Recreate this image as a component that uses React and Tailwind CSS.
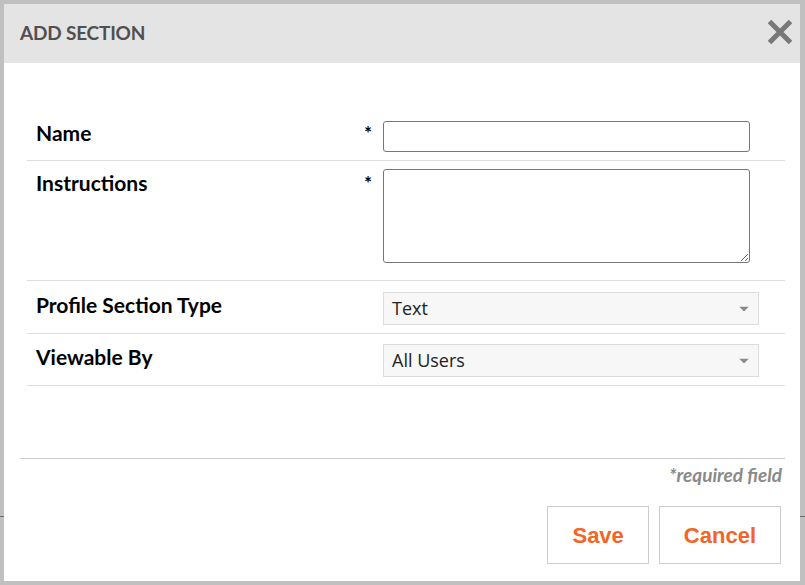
import React from 'react';

const lato = { fontFamily: 'Lato, "Noto Sans", sans-serif' };

const Caret = () => (
  <svg width="10" height="5" viewBox="0 0 10 5" className="absolute right-[9px] top-1/2 -translate-y-1/2">
    <path d="M0 0 L10 0 L5 5 Z" fill="#8a8a8a" />
  </svg>
);

const Select = ({ value }) => (
  <div className="relative w-[376px] h-[33px] bg-[#f7f7f7] border border-[#dcdcdc] flex items-center pl-[8px] text-[18px] text-[#222] font-['Open_Sans',sans-serif]">
    {value}
    <Caret />
  </div>
);

const Row = ({ label, required, className, labelClass = '', children }) => (
  <div className={`flex border-b border-[#dedede] ${className}`}>
    <div className={`w-[337px] shrink-0 pl-[9px] text-[21px] leading-[24px] font-bold text-black ${labelClass}`} style={lato}>
      {label}
    </div>
    <div className={`w-[19px] shrink-0 text-[19px] leading-[24px] font-bold text-black ${labelClass}`} style={lato}>
      {required ? '*' : ''}
    </div>
    {children}
  </div>
);

export default function App() {
  return (
    <div className="relative w-[805px] h-[585px] bg-[#c0c0c0] pt-[4px] pl-[4px] pr-[5px] pb-[4px]">
      {/* page rule showing under the overlay */}
      <div className="absolute left-0 right-0 top-[516px] h-px bg-[#6a6a6a]" />

      <div className="relative h-full bg-white flex flex-col">
        <div className="h-[59px] bg-[#e4e4e4] flex items-center justify-between pl-[16px] pr-[7px]">
          <h2 className="text-[19px] font-bold text-[#505050] tracking-[-0.2px]" style={lato}>
            ADD SECTION
          </h2>
          <svg width="26" height="26" viewBox="0 0 26 26" className="mt-[-3px]">
            <path d="M2.5 2.5 L23.5 23.5 M23.5 2.5 L2.5 23.5" stroke="#787878" strokeWidth="5" />
          </svg>
        </div>

        <div className="ml-[23px] mr-[15px] mt-[48px]">
          <Row label="Name" required className="pt-[10px] pb-[8px]">
            <input className="w-[367px] h-[31px] border border-[#767676] rounded-[3px] outline-none" />
          </Row>
          <Row label="Instructions" required className="pt-[8px] pb-[17px]" labelClass="mt-[2px]">
            <textarea className="w-[367px] h-[94px] border border-[#767676] rounded-[3px] outline-none block" />
          </Row>
          <Row label="Profile Section Type" className="pt-[11px] pb-[8px]" labelClass="mt-[1px]">
            <Select value="Text" />
          </Row>
          <Row label="Viewable By" className="pt-[10px] pb-[8px]" labelClass="mt-[1px]">
            <Select value="All Users" />
          </Row>
        </div>

        <div className="mt-[72px] ml-[16px] mr-[15px] border-t border-[#cccccc] flex flex-col items-end">
          <p className="mt-[4px] mr-[3px] text-[19px] leading-[24px] font-bold italic text-[#8a8a8a]" style={lato}>
            *required field
          </p>
          <div className="mt-[19px] mr-[4px] flex gap-[10px]">
            <button className="h-[58px] px-[24px] border border-[#cccccc] bg-white text-[22px] font-bold text-[#f26526] font-['Liberation_Sans',Arial,sans-serif]">
              Save
            </button>
            <button className="h-[58px] px-[24px] border border-[#cccccc] bg-white text-[22px] font-bold text-[#f26526] font-['Liberation_Sans',Arial,sans-serif]">
              Cancel
            </button>
          </div>
        </div>
      </div>
    </div>
  );
}
